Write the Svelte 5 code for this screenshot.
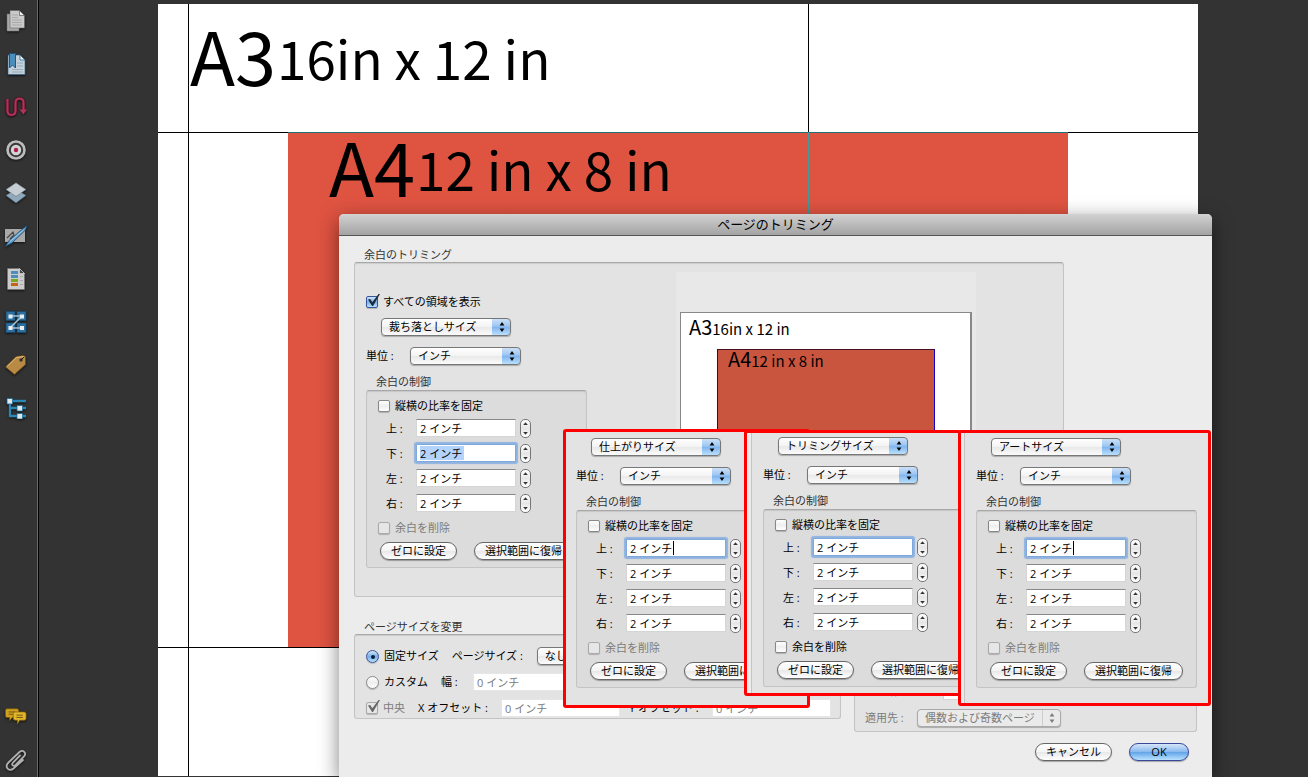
<script>
  const sides = ['上', '下', '左', '右'];

  const mainForm = { id: 'bleed', size: '裁ち落としサイズ', focus: 1, mark: 'selected', canDelete: false };

  const panels = [
    { id: 'trim', size: '仕上がりサイズ', focus: 0, mark: 'caret', canDelete: false },
    { id: 'crop', size: 'トリミングサイズ', focus: 0, mark: '', canDelete: true },
    { id: 'art', size: 'アートサイズ', focus: 0, mark: 'caret', canDelete: false }
  ];

  let showAll = $state(true);
  let sizeMode = $state('fixed');
</script>

{#snippet arrows()}
  <svg class="arrows" viewBox="0 0 8 12" aria-hidden="true">
    <path d="M4 1L6.4 4.600H1.600zM4 11L6.400 7.400H1.600z" fill="currentColor" />
  </svg>
{/snippet}

{#snippet marginForm(form)}
  <div class="form">
    <div class="popup size">
      <select aria-label="サイズ"><option>{form.size}</option></select>
      {@render arrows()}
    </div>
    <div class="unit">
      <label for="{form.id}-unit">単位 :</label>
      <div class="popup">
        <select id="{form.id}-unit"><option>インチ</option></select>
        {@render arrows()}
      </div>
    </div>
    <h3>余白の制御</h3>
    <div class="group inner">
      <label class="check"><input type="checkbox" />縦横の比率を固定</label>
      <div class="sides">
        {#each sides as side, i}
          <div class="side">
            <label for="{form.id}-{i}">{side} :</label>
            <input
              id="{form.id}-{i}"
              type="text"
              class={i === form.focus ? `focused ${form.mark}` : ''}
              value="2 インチ"
            />
            <div class="stepper">
              <button aria-label="増やす"></button>
              <button class="down" aria-label="減らす"></button>
            </div>
          </div>
        {/each}
      </div>
      <label class="check" class:off={!form.canDelete}>
        <input type="checkbox" disabled={!form.canDelete} />余白を削除
      </label>
      <div class="actions">
        <button class="push zero">ゼロに設定</button>
        <button class="push revert">選択範囲に復帰</button>
      </div>
    </div>
  </div>
{/snippet}

<div class="app">
  <nav class="rail">
    <button aria-label="ページ">
      <svg viewBox="0 0 22 22">
        <path d="M2 4h12v17H2z" fill="#a9a9a9" stroke="#777" stroke-width=".6" />
        <path d="M5 .5h9.500l5 5V18H5z" fill="#c9c9c9" stroke="#666" stroke-width=".6" />
        <path d="M14.500.5v5h5z" fill="#eee" stroke="#555" stroke-width=".7" />
        <path d="M7 5h6M7 7.500h6M7 10h10M7 12.500h10M7 15h10" stroke="#a2a2a2" stroke-width=".8" />
      </svg>
    </button>
    <button aria-label="しおり">
      <svg viewBox="0 0 22 22">
        <path d="M3 2h12l5 5v14.500H3z" fill="#c4d0da" stroke="#35688e" stroke-width=".7" />
        <path d="M15 2v5h5z" fill="#eef3f7" stroke="#35688e" stroke-width=".8" />
        <path d="M12 10h6M12 13h6M7 16.500h11M7 19h11" stroke="#8fa2b0" stroke-width=".8" />
        <path d="M4.500.5h6V15l-3-3-3 3z" fill="#4b8dbb" stroke="#1f587f" />
      </svg>
    </button>
    <button aria-label="アーティクル">
      <svg viewBox="0 0 22 22" fill="none">
        <path d="M2.500 3v12c0 5.300 8 5.300 8 0V6.500c0-5.300 8-5.300 8 0V15" stroke="#6f1835" stroke-width="3" />
        <path d="M2.500 3v12c0 5.300 8 5.300 8 0V6.500c0-5.300 8-5.300 8 0V15" stroke="#b03459" stroke-width="1.800" />
        <path d="M14.500 13.500h7.500l-3.700 5z" fill="#b03459" />
      </svg>
    </button>
    <button aria-label="リンク先">
      <svg viewBox="0 0 22 22">
        <circle cx="11" cy="11" r="9.800" fill="#bdbdbd" />
        <circle cx="11" cy="11" r="7.200" fill="#3a3a3a" />
        <circle cx="11" cy="11" r="5.200" fill="#d4d4d4" />
        <circle cx="11" cy="11" r="2.200" fill="#ae1d48" />
      </svg>
    </button>
    <button aria-label="レイヤー">
      <svg viewBox="0 0 22 22">
        <path d="M1 13.500L11 7l10 6.500L11 21z" fill="#8fa9ba" stroke="#55697a" stroke-width=".6" />
        <path d="M1 7.500L11 .8l10 6.700-10 7z" fill="#c6ced4" stroke="#687681" stroke-width=".6" />
      </svg>
    </button>
    <button aria-label="署名">
      <svg viewBox="0 0 22 22">
        <path d="M0 4h20v13H0z" fill="#a9a9a9" />
        <path d="M2 13L8 7l1 3-4 4 7-3-2 3" fill="none" stroke="#444" stroke-width="1.200" />
        <path d="M.5 21.500L3.500 16 18 3.500l4-3-1.500 4.500L7 18z" fill="#5f9bc6" stroke="#204d70" stroke-width=".8" />
        <path d="M5 16.500L18.500 5" stroke="#aed0e8" />
      </svg>
    </button>
    <button aria-label="コンテンツ">
      <svg viewBox="0 0 22 22">
        <path d="M2.500.5h12l5 5v16h-17z" fill="#ccc" stroke="#777" stroke-width=".6" />
        <path d="M14.500.5v5h5z" fill="#444" stroke="#ddd" stroke-width=".7" />
        <path d="M6 3h7v3H6zM6 7h7v3H6z" fill="#4b8ebc" />
        <path d="M6 11h7v3H6z" fill="#7ea520" />
        <path d="M6 15h7v3H6z" fill="#c4641c" />
        <path d="M15 8.500h3M15 12.500h3M15 16.500h3" stroke="#aaa" />
      </svg>
    </button>
    <button aria-label="順序">
      <svg viewBox="0 0 22 22">
        <path d="M1 .5h9v9H1zM12 .5h9v9h-9zM1 12h9v9.500H1zM12 12h9v9.500h-9z" fill="#2d6f9f" stroke="#184b70" stroke-width=".8" />
        <path d="M5 5h12L5 17h12" fill="none" stroke="#9fc1d6" stroke-width="1.500" />
        <path d="M3.500 3.500h4v4h-4zM15 3.500h4v4h-4zM3.500 15h4v4h-4zM15 15h4v4h-4z" fill="#e8edf0" />
      </svg>
    </button>
    <button aria-label="タグ">
      <svg viewBox="0 0 22 22">
        <path d="M.5 13L11 2.500l8-1 1.500 1.500v7.500L9.500 20.500z" fill="#b98a43" stroke="#6d4c1d" stroke-width=".8" />
        <path d="M2 12.500L11.500 3.500l7-1" stroke="#e2bd7c" fill="none" />
        <circle cx="16" cy="6" r="1.700" fill="#333" />
        <path d="M16 6l3-3" stroke="#222" />
      </svg>
    </button>
    <button aria-label="構造">
      <svg viewBox="0 0 22 22">
        <path d="M5 4h16M5 4v15h16M5 11h16" fill="none" stroke="#2c87b4" stroke-width="2.400" />
        <path d="M2 1.500h5.500V7H2zM12 8.500h5.500v5.500H12zM12 16.500h5.500V22H12z" fill="#e2e7ea" stroke="#1c6d99" stroke-width=".8" />
      </svg>
    </button>
    <button class="push-down" aria-label="注釈">
      <svg viewBox="0 0 24 22">
        <path d="M2 2h11q2 0 2 2v6q0 1.500-2 1.500H8L5 15v-3.500H2Q.5 11.500.5 10V4Q.5 2 2 2z" fill="#cf9f20" stroke="#7c5b0c" stroke-width=".8" />
        <path d="M4 5.500h7M4 8h5" stroke="#6d5010" />
        <path d="M11 5.500h10q2 0 2 2v5q0 2-2 2h-5L13.500 19v-4.500H11q-2 0-2-2v-5q0-2 2-2z" fill="#e0b72c" stroke="#86640d" stroke-width=".8" />
        <path d="M12.500 9h7M12.500 11.500h7" stroke="#6d5010" />
      </svg>
    </button>
    <button aria-label="添付ファイル">
      <svg viewBox="0 0 22 22" fill="none">
        <path
          d="M15 6.500L8 13.500c-2 2.300.5 4.500 2.600 2.500L19 7.500c3-3.500-1-7.500-4.500-4.500L3.500 13.500C-1 18 4 23.500 8.500 19.500L18 11"
          stroke="#b0b0b0"
          stroke-width="1.800"
          stroke-linecap="round"
        />
      </svg>
    </button>
  </nav>

  <main class="workspace">
    <div class="page">
      <p class="caption a3"><span class="paper">A3</span><span class="dims">16in x 12 in</span></p>
      <div class="sheet">
        <p class="caption a4"><span class="paper">A4</span><span class="dims">12 in x 8 in</span></p>
      </div>
      <i class="guide h top"></i>
      <i class="guide h bottom"></i>
      <i class="guide v left"></i>
      <i class="guide v middle"></i>
    </div>
  </main>

  <div class="dialog" role="dialog" aria-labelledby="dialog-title">
    <h1 id="dialog-title">ページのトリミング</h1>
    <div class="body">
      <h2>余白のトリミング</h2>
      <div class="group trimming">
        <div class="settings">
          <label class="check"><input type="checkbox" bind:checked={showAll} />すべての領域を表示</label>
          {@render marginForm(mainForm)}
        </div>
        <div class="preview">
          <div class="mini-page">
            <p class="mini a3"><span>A3</span>16in x 12 in</p>
            <div class="mini-sheet">
              <p class="mini"><span>A4</span>12 in x 8 in</p>
            </div>
          </div>
        </div>
      </div>

      <div class="lower">
        <section>
          <h2>ページサイズを変更</h2>
          <div class="group rows">
            <div class="row">
              <label class="check"><input type="radio" value="fixed" bind:group={sizeMode} />固定サイズ</label>
              <label class="page-size" for="page-size">ページサイズ :</label>
              <div class="popup">
                <select id="page-size"><option>なし</option></select>
                {@render arrows()}
              </div>
            </div>
            <div class="row">
              <label class="check"><input type="radio" value="custom" bind:group={sizeMode} />カスタム</label>
              <label class="width" for="width">幅 :</label>
              <input id="width" type="text" value="0 インチ" disabled />
            </div>
            <div class="row">
              <label class="check off"><input type="checkbox" checked disabled />中央</label>
              <label class="offset-x" for="offset-x">X オフセット :</label>
              <input id="offset-x" type="text" value="0 インチ" disabled />
              <label class="offset-y" for="offset-y">Y オフセット :</label>
              <input id="offset-y" type="text" value="0 インチ" disabled />
            </div>
          </div>
        </section>
        <section class="group range">
          <div class="row from">
            <label for="from">開始 :</label>
            <input id="from" type="text" value="2" />
          </div>
          <div class="row off">
            <label for="apply">適用先 :</label>
            <div class="popup">
              <select id="apply" disabled><option>偶数および奇数ページ</option></select>
              {@render arrows()}
            </div>
          </div>
        </section>
      </div>

      <div class="footer">
        <button class="push cancel">キャンセル</button>
        <button class="push ok">OK</button>
      </div>
    </div>

    {#each panels as panel}
      <div class="panel {panel.id}">
        <div class="panel-body">{@render marginForm(panel)}</div>
      </div>
    {/each}
  </div>
</div>

<style>
  :global(body) {
    margin: 0;
    background: #333;
  }

  .app {
    position: relative;
    display: flex;
    min-height: 100vh;
    overflow: hidden;
    background: #333;
    color: #000;
    font: 11px/16px 'Open Sans', 'Noto Sans CJK JP', sans-serif;
  }

  .app * {
    box-sizing: border-box;
  }

  h1,
  h2,
  h3,
  p {
    margin: 0;
    font-weight: 400;
  }

  button,
  input,
  select {
    margin: 0;
    padding: 0;
    border: 0;
    font: inherit;
    color: inherit;
  }

  label {
    white-space: nowrap;
  }

  /* navigation icons */
  .rail {
    display: flex;
    flex-direction: column;
    flex: none;
    gap: 21px;
    width: 39px;
    padding: 10px 0 6px 5px;
    border-right: 1px solid #000;
    box-shadow: inset -1px 0 #6a6a6a;
  }

  .rail button {
    width: 22px;
    height: 22px;
    background: none;
  }

  .rail svg {
    display: block;
    width: 22px;
    height: 22px;
    filter: drop-shadow(0 1px 1px #111);
  }

  .rail .push-down {
    margin-top: auto;
  }

  /* document behind the dialog */
  .workspace {
    display: flex;
    flex: 1;
    padding: 4px 110px 1px 119px;
  }

  .page {
    position: relative;
    flex: 1;
    padding: 129px 130px 128px;
    background: #fff;
  }

  .sheet {
    height: 100%;
    background: #df5341;
  }

  .caption {
    display: flex;
    align-items: center;
    font-family: 'Noto Sans CJK JP', sans-serif;
    white-space: nowrap;
  }

  .caption.a3 {
    position: absolute;
    left: 32px;
    top: 12px;
  }

  .caption.a4 {
    height: 64px;
    padding-left: 41px;
  }

  .paper {
    width: 87px;
    font-size: 74px;
    line-height: 76px;
  }

  .dims {
    padding-top: 6px;
    font-size: 53px;
    line-height: 64px;
  }

  .guide {
    position: absolute;
    background: #000;
  }

  .guide.h {
    left: 0;
    right: 0;
    height: 1px;
  }

  .guide.v {
    top: 0;
    bottom: 0;
    width: 1px;
  }

  .guide.top {
    top: 128px;
    background: linear-gradient(90deg, #000 130px, #1c7476 130px calc(100% - 130px), #000 calc(100% - 130px));
  }

  .guide.bottom {
    bottom: 128px;
  }

  .guide.left {
    left: 30px;
  }

  .guide.middle {
    left: 650px;
    background: linear-gradient(#000 128px, #3d9c9c 128px);
  }

  /* dialog window */
  .dialog {
    position: absolute;
    left: 339px;
    right: 96px;
    top: 214px;
    bottom: 0;
    border-radius: 5px 5px 0 0;
    background: #ececec;
    box-shadow: 0 6px 20px rgba(0, 0, 0, 0.5);
  }

  h1 {
    height: 22px;
    border-bottom: 1px solid #555;
    border-radius: 5px 5px 0 0;
    background: linear-gradient(#d2d2d2, #a3a3a3);
    font-size: 13px;
    line-height: 21px;
    text-align: center;
  }

  .body {
    padding: 10px 15px 0;
  }

  h2 {
    height: 16px;
    padding-left: 10px;
    font-size: 11px;
    line-height: 18px;
    color: #333;
  }

  .group {
    border: 1px solid #c4c4c4;
    border-top-color: #a8a8a8;
    border-radius: 3px;
    background: #e3e3e3;
    box-shadow: inset 0 1px 1px rgba(0, 0, 0, 0.1);
  }

  .trimming {
    display: flex;
    justify-content: space-between;
    margin-right: 133px;
    padding: 0 87px 0 11px;
  }

  .settings {
    display: flex;
    flex-direction: column;
    gap: 8px;
    padding: 31px 0 28px;
  }

  .preview {
    width: 300px;
    margin-top: 9px;
    padding: 40px 4px 0;
    background: #e8e8e8;
  }

  .mini-page {
    width: 292px;
    height: 230px;
    border: 1px solid #888;
    border-right-width: 2px;
    background: #fff;
  }

  .mini {
    height: 18px;
    padding-left: 10px;
    font: 15px/18px 'Noto Sans CJK JP', sans-serif;
    white-space: nowrap;
  }

  .mini.a3 {
    margin-top: 5px;
    padding-left: 8px;
  }

  .mini span {
    font-size: 20px;
  }

  .mini-sheet {
    width: 218px;
    height: 146px;
    margin: 13px 0 0 36px;
    border: 1px solid #10c;
    border-top-color: #412;
    background: #c9553f;
  }

  /* check boxes and radio buttons */
  .check {
    display: flex;
    align-items: center;
    height: 16px;
  }

  .check input {
    flex: none;
    position: relative;
    width: 12px;
    height: 12px;
    margin-right: 5px;
    appearance: none;
    border: 1px solid #888;
    border-radius: 2px;
    background: linear-gradient(#fff, #eee 50%, #fff);
    box-shadow: 0 1px 1px rgba(0, 0, 0, 0.2);
  }

  .check input:checked {
    border-color: #35569b;
    background: linear-gradient(#d3e5f9, #77aee9 50%, #b9e1fc);
  }

  .check input[type='checkbox']:checked::after {
    content: '';
    position: absolute;
    left: 1px;
    top: -3px;
    width: 12px;
    height: 12px;
    background: #1b2a3c;
    clip-path: polygon(0 45%, 18% 42%, 36% 68%, 88% 0, 100% 0, 42% 100%, 34% 100%);
  }

  .check input[type='radio'] {
    width: 13px;
    height: 13px;
    border-radius: 50%;
  }

  .check input[type='radio']:checked::after {
    content: '';
    position: absolute;
    left: 4px;
    top: 4px;
    width: 4px;
    height: 4px;
    border-radius: 50%;
    background: #0a1c38;
  }

  .off {
    color: #7b7b7b;
  }

  .check.off input,
  .check.off input:checked {
    border-color: #aaa;
    background: #e6e6e6;
  }

  .check.off input[type='checkbox']:checked::after {
    background: #666;
  }

  /* pop-up menus */
  .popup {
    position: relative;
    width: 111px;
    height: 18px;
  }

  .popup.size {
    width: 130px;
    margin-left: 15px;
  }

  select {
    display: block;
    width: 100%;
    height: 18px;
    padding-left: 7px;
    appearance: none;
    border: 1px solid #777;
    border-radius: 4px;
    background:
      linear-gradient(#cbe0f7, #9dc6f3 45%, #7fb4ee 50%, #b9dffb) right / 18px 100% no-repeat,
      linear-gradient(#fff, #f3f3f3 50%, #e9e9e9 52%, #fbfbfb);
    box-shadow: 0 1px 1px rgba(0, 0, 0, 0.25);
    line-height: 16px;
  }

  select:disabled {
    border-color: #aaa;
    background: linear-gradient(90deg, transparent calc(100% - 18px), #ccc calc(100% - 18px) calc(100% - 17px), transparent 0) #eaeaea;
    opacity: 1;
    color: #7b7b7b;
  }

  .arrows {
    position: absolute;
    right: 5px;
    top: 3px;
    width: 8px;
    height: 12px;
    pointer-events: none;
  }

  /* margin settings */
  .form {
    width: 221px;
  }

  .unit {
    display: flex;
    margin-top: 11px;
  }

  .unit label {
    width: 44px;
    line-height: 18px;
  }

  h3 {
    height: 17px;
    margin-top: 8px;
    padding-left: 10px;
    font-size: 11px;
    line-height: 18px;
    color: #333;
  }

  .inner {
    padding: 7px 0 7px 11px;
    background: #dcdcdc;
  }

  .sides {
    display: flex;
    flex-direction: column;
    gap: 7px;
    margin: 5px 0 8px;
    padding-left: 8px;
  }

  .side {
    display: flex;
    height: 18px;
    line-height: 20px;
  }

  .side label {
    width: 30px;
  }

  input[type='text'] {
    width: 100px;
    height: 18px;
    padding: 0 4px;
    border: 1px solid #d5d5d5;
    border-top-color: #888;
    border-radius: 0;
    background-color: #fff;
    outline: none;
    line-height: 16px;
  }

  .side input[type='text'] {
    padding-left: 3px;
  }

  input[type='text'].focused {
    border-color: #7fa9dc;
    border-radius: 1px;
    box-shadow: 0 0 1px 2px #8fb3e0;
  }

  input[type='text'].selected {
    background: linear-gradient(#b3d3fc, #b3d3fc) 3px 1px / 44px 14px no-repeat #fff;
  }

  input[type='text'].caret {
    background: linear-gradient(#000, #000) 46px 1px / 1px 14px no-repeat #fff;
  }

  input[type='text']:disabled {
    border-color: #e6e6e6;
    color: #7b7b7b;
  }

  .stepper {
    display: flex;
    flex-direction: column;
    width: 11px;
    height: 19px;
    margin-left: 4px;
    border: 1px solid #777;
    border-radius: 5px;
    background: linear-gradient(#fff, #e6e6e6 50%, #fff);
  }

  .stepper button {
    flex: 1;
    background: none;
    line-height: 0;
  }

  .stepper button::after {
    content: '';
    display: block;
    width: 5px;
    height: 3px;
    margin: 0 2px 1px;
    background: #333;
    clip-path: polygon(50% 0, 100% 100%, 0 100%);
  }

  .stepper .down::after {
    margin: 1px 2px 0;
    clip-path: polygon(0 0, 100% 0, 50% 100%);
  }

  .actions {
    display: flex;
    gap: 17px;
    margin: 6px 0 0 2px;
  }

  .push {
    height: 18px;
    border: 1px solid #666;
    border-radius: 9px;
    background: linear-gradient(#fff, #f4f4f4 50%, #e8e8e8 52%, #fff);
    box-shadow: 0 1px 1px rgba(0, 0, 0, 0.3);
    line-height: 16px;
    white-space: nowrap;
  }

  .zero,
  .cancel {
    width: 77px;
  }

  .revert {
    width: 99px;
  }

  .ok {
    width: 60px;
    border-color: #3b479b;
    background: linear-gradient(#d5e6f8, #8abaf0 48%, #64a4e8 52%, #b8e2ff);
  }

  /* page size and page range */
  .lower {
    display: grid;
    grid-template-columns: 487fr 343fr;
    gap: 13px;
    margin-top: 21px;
  }

  .lower section {
    min-width: 0;
  }

  .rows {
    display: flex;
    flex-direction: column;
    gap: 8px;
    padding: 12px 0 1px 11px;
  }

  .row {
    display: flex;
    align-items: center;
    height: 18px;
  }

  .page-size {
    width: 85px;
    margin-left: 13px;
  }

  .width {
    width: 32px;
    margin-left: 13px;
  }

  .row #width,
  .row #offset-x,
  .row #offset-y {
    width: 119px;
    padding-left: 3px;
  }

  .offset-x {
    width: 83px;
    margin-left: 13px;
  }

  .offset-y {
    width: 83px;
    margin-left: 9px;
  }

  .range {
    display: flex;
    flex-direction: column;
    gap: 9px;
    margin-top: 16px;
    padding: 47px 0 4px 10px;
  }

  .range label {
    width: 52px;
  }

  .range .popup {
    width: 144px;
  }

  .range .from {
    padding-left: 10px;
  }

  .range .from label {
    width: 68px;
  }

  .footer {
    display: flex;
    justify-content: flex-end;
    gap: 17px;
    margin-top: 11px;
    padding-right: 8px;
  }

  /* variants shown over the dialog */
  .panel {
    position: absolute;
    overflow: hidden;
    border: 3px solid #f00;
    border-radius: 3px;
    background: #ececec;
  }

  .panel-body {
    height: 100%;
    padding: 5px 0 0 11px;
    border-left: 1px solid #c4c4c4;
    background: #e3e3e3;
  }

  .panel.trim {
    left: 224px;
    top: 215px;
    width: 247px;
    height: 279px;
  }

  .panel.trim .panel-body {
    padding: 6px 0 0 10px;
    border-left: 0;
  }

  .panel.crop {
    left: 405px;
    top: 216px;
    width: 217px;
    height: 266px;
    padding-left: 4px;
  }

  .panel.crop .panel-body {
    padding-top: 4px;
  }

  .panel.art {
    left: 619px;
    top: 216px;
    width: 253px;
    height: 276px;
    padding-left: 3px;
  }
</style>
